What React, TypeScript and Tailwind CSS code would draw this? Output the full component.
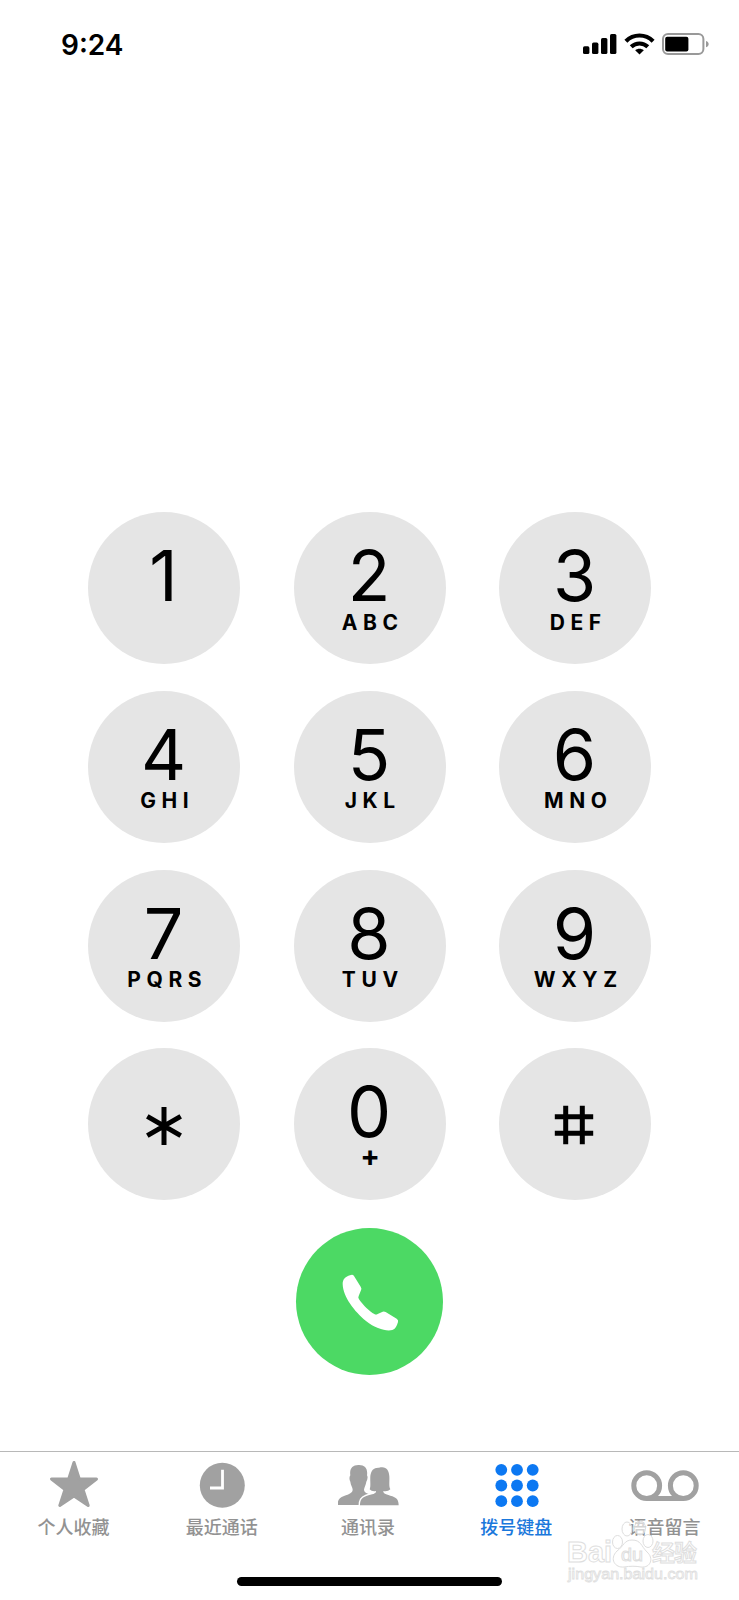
import React from "react";

const keys: { digit: string; letters?: string }[] = [
  { digit: "1" },
  { digit: "2", letters: "ABC" },
  { digit: "3", letters: "DEF" },
  { digit: "4", letters: "GHI" },
  { digit: "5", letters: "JKL" },
  { digit: "6", letters: "MNO" },
  { digit: "7", letters: "PQRS" },
  { digit: "8", letters: "TUV" },
  { digit: "9", letters: "WXYZ" },
  { digit: "*" },
  { digit: "0", letters: "+" },
  { digit: "#" },
];

function SignalIcon() {
  return (
    <svg width="34" height="22" viewBox="0 0 34 22">
      <rect x="0" y="13.3" width="6.4" height="7.8" rx="1.6" />
      <rect x="9" y="9.6" width="6.4" height="11.5" rx="1.6" />
      <rect x="18" y="5" width="6.4" height="16.1" rx="1.6" />
      <rect x="27" y="1" width="6.4" height="20.1" rx="1.6" />
    </svg>
  );
}

function WifiIcon() {
  return (
    <svg width="31" height="22" viewBox="0 0 31 22" fill="none" stroke="#000" strokeWidth="4.2">
      <path d="M1.900 8.200C9.500 .6 21.500 .6 29.100 8.200" />
      <path d="M7.200 13.800c4.800-4.400 11.800-4.400 16.600 0" />
      <path d="M15.500 21.600l-4.300-4.400c2.400-2 6.200-2 8.600 0z" fill="#000" stroke="none" />
    </svg>
  );
}

function BatteryIcon() {
  return (
    <svg width="48" height="22" viewBox="0 0 48 22">
      <rect x="1" y="1" width="40.4" height="20" rx="5" fill="none" stroke="#999" strokeWidth="2" />
      <rect x="3.2" y="3.7" width="23.2" height="14.8" rx="2" />
      <path d="M44 8c3.600 1 3.600 5.200 0 6.200z" fill="#999" />
    </svg>
  );
}

function StarKey() {
  return (
    <svg aria-label="*" width="40" height="40" viewBox="-20 -20 40 40" stroke="#000" strokeWidth="5" className="mt-[57.5px] -ml-[1px]">
      <path d="M0-19V19M-16.700-9.600L16.700 9.600M16.700-9.600L-16.700 9.600" />
    </svg>
  );
}

function HashKey() {
  return (
    <svg aria-label="#" width="40" height="40" viewBox="-20 -20 40 40" stroke="#000" strokeWidth="5" className="mt-[57px] -ml-[2px]">
      <path d="M-8.300-19.300V19.300M8.300-19.300V19.300M-19.200-8.300H19.200M-19.200 8.300H19.200" />
    </svg>
  );
}

function Key({ digit, letters }: { digit: string; letters?: string }) {
  return (
    <button className="flex h-[152px] w-[152px] flex-col items-center rounded-full bg-[#e5e5e5]">
      {digit === "*" ? (
        <StarKey />
      ) : digit === "#" ? (
        <HashKey />
      ) : (
        <span className="mt-[29px] -ml-[1px] text-[70px] leading-[70px]">{digit}</span>
      )}
      {letters === "+" ? (
        <span className="-mt-[2px] ml-[1px] text-[29px] leading-[21px] font-bold">+</span>
      ) : letters ? (
        <span className="-mr-[6.5px] mt-[0.5px] text-[21px] leading-[21px] font-bold tracking-[5.6px]">{letters}</span>
      ) : null}
    </button>
  );
}

function FavoritesIcon() {
  return (
    <svg width="50" height="48" viewBox="0 0 50 48" fill="#a1a1a1" stroke="#a1a1a1" strokeWidth="3" strokeLinejoin="round">
      <path d="M25 2.500L30.300 19H47.500L34 29.500L39.200 45.500L25 36L10.800 45.500L16 29.500L2.500 19H19.700Z" />
    </svg>
  );
}

function RecentsIcon() {
  return (
    <svg width="46" height="48" viewBox="0 0 46 48">
      <circle cx="23.300" cy="25.300" r="22.500" fill="#a1a1a1" />
      <path d="M23.500 9.700V28H11" fill="none" stroke="#fff" strokeWidth="2.800" />
    </svg>
  );
}

function ContactsIcon() {
  return (
    <svg width="62" height="48" viewBox="25 15 186 144" fill="#a1a1a1">
      <path d="M24 150C24 134 29 128 43 123C59 117 69 113 69 104C69 97 63 91 62 80C58 73 59 65 62 61C59 41 68 30 86 30C105 29 115 40 112 61C115 65 114 73 110 80C108 92 104 96 103 104C103 111 109 114 120 118L110 150Z" />
      <path
        d="M91 153C91 136 95 129 110 123C128 117 140 117 139 108C132 110 124 108 120 103C124 94 121 78 122 63C124 45 133 37 148 38C169 32 178 45 179 64C180 80 177 94 182 103C177 108 169 110 161 108C160 117 171 118 188 124C202 129 207 136 207 153Z"
        stroke="#fff"
        strokeWidth="9"
        paintOrder="stroke"
      />
      <path d="M20 150.500H212V160H20Z" fill="#fff" />
    </svg>
  );
}

function KeypadIcon() {
  const places = [8.3, 24, 39.7];
  return (
    <svg width="48" height="48" viewBox="0 0 48 48" fill="#0c78f2">
      {places.map((y) => places.map((x) => <circle key={`${x}-${y}`} cx={x} cy={y + 1.5} r="5.9" />))}
    </svg>
  );
}

function VoicemailIcon() {
  return (
    <svg width="68" height="48" viewBox="0 0 68 48" fill="none" stroke="#a1a1a1" strokeWidth="5">
      <circle cx="15.700" cy="25.700" r="12.900" />
      <circle cx="52.300" cy="25.700" r="12.900" />
      <path d="M15.700 38.600H52.300" />
    </svg>
  );
}

const idle = "flex flex-col items-center gap-[10px] pt-2 text-[#929292]";
const tabs = [
  { label: "个人收藏", icon: <FavoritesIcon />, style: idle, labelStyle: "-ml-[1px]" },
  { label: "最近通话", icon: <RecentsIcon />, style: idle, labelStyle: "" },
  { label: "通讯录", icon: <ContactsIcon />, style: idle, labelStyle: "-ml-[3px]" },
  {
    label: "拨号键盘",
    icon: <KeypadIcon />,
    style: "flex flex-col items-center gap-[10px] pt-2 pr-[1px] text-[#1a78dc]",
    labelStyle: "-ml-[1px]",
  },
  { label: "语音留言", icon: <VoicemailIcon />, style: idle, labelStyle: "-ml-[1px]" },
];

function Watermark() {
  return (
    <svg
      className="absolute top-[1515px] left-[562px] font-['Liberation_Sans','Noto_Sans_CJK_SC',sans-serif]"
      width="145"
      height="75"
      viewBox="0 0 145 75"
      fill="#fff"
      fillOpacity="0.6"
      stroke="#dedede"
      strokeWidth="1"
    >
      <text x="5" y="47" fontSize="30" fontWeight="700" textLength="45" lengthAdjust="spacingAndGlyphs">Bai</text>
      <ellipse cx="55.500" cy="27" rx="5" ry="6.500" />
      <ellipse cx="65" cy="14" rx="5" ry="7" />
      <ellipse cx="78" cy="13" rx="5.500" ry="7" />
      <ellipse cx="86" cy="26" rx="5" ry="6.500" />
      <path d="M70 25C62 25 62 31 55 36C47 44 53 53 62 52C68 51 74 51 79 52C89 53 92 43 85 37C79 31 79 25 70 25Z" />
      <text x="59" y="46" fontSize="19" textLength="22" lengthAdjust="spacingAndGlyphs">du</text>
      <text x="90" y="46" fontSize="23" fontWeight="500" textLength="45">经验</text>
      <text x="6" y="64" fontSize="15" strokeWidth="0.8" textLength="130" lengthAdjust="spacingAndGlyphs">jingyan.baidu.com</text>
    </svg>
  );
}

export default function App() {
  return (
    <div className="relative flex h-[1600px] w-[739px] flex-col overflow-hidden bg-white font-['Inter','Noto_Sans_CJK_SC',sans-serif] text-black">
      <header className="flex h-[88px] items-center justify-between pr-[29px] pl-[61px]">
        <span className="pt-[2px] text-[28px] leading-7 font-semibold">9:24</span>
        <div className="flex items-center gap-[7px]">
          <SignalIcon />
          <WifiIcon />
          <BatteryIcon />
        </div>
      </header>

      <main className="flex flex-1 flex-col items-center pt-[424.3px]">
        <div className="grid grid-cols-3 gap-x-[53.5px] gap-y-[26.7px]">
          {keys.map((key) => (
            <Key key={key.digit} {...key} />
          ))}
        </div>
        <button className="mt-[28px] h-[147px] w-[147px] rounded-full bg-[#4cd964]">
          <svg width="147" height="147" viewBox="48 39 441 441" fill="#fff">
            <path d="M210 181Q218 177 222 183L242 215Q246 221 243 226L236 243Q233 248 238 254C249 270 269 289 283 297Q288 300 293 297L308 290Q312 288 317 291L350 311Q356 315 354 321C350 334 346 342 337 345C319 350 287 341 258 318C224 290 189 246 188 207C188 192 197 185 210 181Z" />
          </svg>
        </button>
      </main>

      <nav className="grid h-[149px] grid-cols-5 items-start border-t border-[#b8b8b8]">
        {tabs.map((tab) => (
          <div key={tab.label} className={tab.style}>
            {tab.icon}
            <span className={tab.labelStyle}>
              <span className="block text-[18px] leading-5 font-medium">{tab.label}</span>
            </span>
          </div>
        ))}
      </nav>

      <div className="absolute top-[1577px] left-[237px] h-[9px] w-[265px] rounded-full bg-black" />
      <Watermark />
    </div>
  );
}
